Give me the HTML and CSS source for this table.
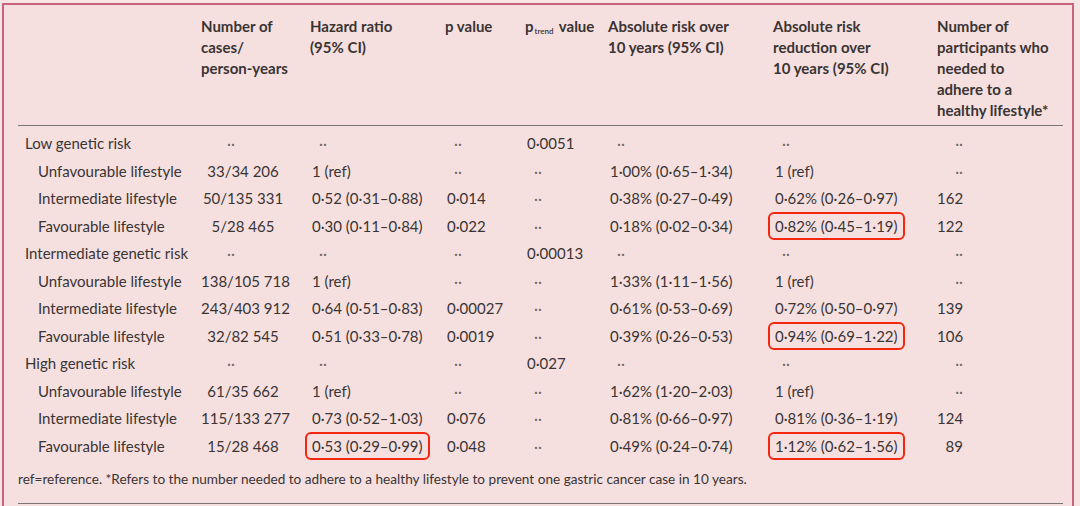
FILE: index.html
```html
<!DOCTYPE html>
<html lang="en">
<head>
<meta charset="utf-8">
<title>Table</title>
<link rel="stylesheet" href="styles.css">
</head>
<body>
<div class="panel">
  <table class="tbl">
    <colgroup>
      <col class="w0"><col class="w1"><col class="w2"><col class="w3"><col class="w4"><col class="w5"><col class="w6"><col class="w7">
    </colgroup>
    <thead>
      <tr>
        <th></th>
        <th>Number of<br>cases/<br>person-years</th>
        <th>Hazard ratio<br>(95% CI)</th>
        <th>p value</th>
        <th>p<sub>trend</sub> value</th>
        <th>Absolute risk over<br>10 years (95% CI)</th>
        <th>Absolute risk<br>reduction over<br>10 years (95% CI)</th>
        <th>Number of<br>participants who<br>needed to<br>adhere to a<br>healthy lifestyle*</th>
      </tr>
    </thead>
    <tbody>
      <tr class="grp"><td class="lbl">Low genetic risk</td><td class="c1 na">··</td><td class="na">··</td><td class="na">··</td><td>0·0051</td><td class="na">··</td><td class="na">··</td><td class="c7 na">··</td></tr>
      <tr><td class="lbl sub">Unfavourable lifestyle</td><td class="c1">33/34 206</td><td>1 (ref)</td><td class="na">··</td><td class="na">··</td><td>1·00% (0·65–1·34)</td><td>1 (ref)</td><td class="c7 na">··</td></tr>
      <tr><td class="lbl sub">Intermediate lifestyle</td><td class="c1">50/135 331</td><td>0·52 (0·31–0·88)</td><td>0·014</td><td class="na">··</td><td>0·38% (0·27–0·49)</td><td>0·62% (0·26–0·97)</td><td class="c7">162</td></tr>
      <tr><td class="lbl sub">Favourable lifestyle</td><td class="c1">5/28 465</td><td>0·30 (0·11–0·84)</td><td>0·022</td><td class="na">··</td><td>0·18% (0·02–0·34)</td><td><span class="hl">0·82% (0·45–1·19)</span></td><td class="c7">122</td></tr>
      <tr class="grp"><td class="lbl">Intermediate genetic risk</td><td class="c1 na">··</td><td class="na">··</td><td class="na">··</td><td>0·00013</td><td class="na">··</td><td class="na">··</td><td class="c7 na">··</td></tr>
      <tr><td class="lbl sub">Unfavourable lifestyle</td><td class="c1">138/105 718</td><td>1 (ref)</td><td class="na">··</td><td class="na">··</td><td>1·33% (1·11–1·56)</td><td>1 (ref)</td><td class="c7 na">··</td></tr>
      <tr><td class="lbl sub">Intermediate lifestyle</td><td class="c1">243/403 912</td><td>0·64 (0·51–0·83)</td><td>0·00027</td><td class="na">··</td><td>0·61% (0·53–0·69)</td><td>0·72% (0·50–0·97)</td><td class="c7">139</td></tr>
      <tr><td class="lbl sub">Favourable lifestyle</td><td class="c1">32/82 545</td><td>0·51 (0·33–0·78)</td><td>0·0019</td><td class="na">··</td><td>0·39% (0·26–0·53)</td><td><span class="hl">0·94% (0·69–1·22)</span></td><td class="c7">106</td></tr>
      <tr class="grp"><td class="lbl">High genetic risk</td><td class="c1 na">··</td><td class="na">··</td><td class="na">··</td><td>0·027</td><td class="na">··</td><td class="na">··</td><td class="c7 na">··</td></tr>
      <tr><td class="lbl sub">Unfavourable lifestyle</td><td class="c1">61/35 662</td><td>1 (ref)</td><td class="na">··</td><td class="na">··</td><td>1·62% (1·20–2·03)</td><td>1 (ref)</td><td class="c7 na">··</td></tr>
      <tr><td class="lbl sub">Intermediate lifestyle</td><td class="c1">115/133 277</td><td>0·73 (0·52–1·03)</td><td>0·076</td><td class="na">··</td><td>0·81% (0·66–0·97)</td><td>0·81% (0·36–1·19)</td><td class="c7">124</td></tr>
      <tr><td class="lbl sub">Favourable lifestyle</td><td class="c1">15/28 468</td><td><span class="hl">0·53 (0·29–0·99)</span></td><td>0·048</td><td class="na">··</td><td>0·49% (0·24–0·74)</td><td><span class="hl">1·12% (0·62–1·56)</span></td><td class="c7">89</td></tr>
    </tbody>
  </table>
  <p class="note">ref=reference. *Refers to the number needed to adhere to a healthy lifestyle to prevent one gastric cancer case in 10 years.</p>
  <div class="rule"></div>
</div>
</body>
</html>
```

FILE: styles.css
```css
html, body {
  margin: 0;
  padding: 0;
  background: #f7e5e4;
}
body {
  font-family: Lato, "Open Sans", "DejaVu Sans", sans-serif;
  color: #3a3434;
  height: 506px;
  overflow: hidden;
}
.panel {
  margin: 3px 0 0 2px;
  width: 1072px;
  height: 520px;
  background: #f5e0df;
  border: 2px solid #c9637c;
  border-bottom: none;
  padding: 11px 0 0 14px;
  box-sizing: border-box;
}
.tbl {
  border-collapse: collapse;
  table-layout: fixed;
  width: 1045px;
  font-size: 15px;
}
.w0 { width: 183px; }
.w1 { width: 109px; }
.w2 { width: 135px; }
.w3 { width: 80px; }
.w4 { width: 83px; }
.w5 { width: 165px; }
.w6 { width: 164px; }
.w7 { width: 126px; }

.tbl th {
  text-align: left;
  vertical-align: top;
  font-weight: 700;
  line-height: 21px;
  padding: 0 0 4px 0;
  border-bottom: 1.5px solid #7a7474;
  color: #3a3434;
  white-space: nowrap;
}
.tbl th sub {
  font-size: 8px;
  font-weight: 600;
  vertical-align: -2px;
  line-height: 0;
  margin: 0 2px 0 1px;
}
.tbl td {
  height: 27.5px;
  padding: 0 0 0 2px;
  line-height: 27.5px;
  white-space: nowrap;
  vertical-align: middle;
}
.tbl tbody tr:first-child td {
  height: 28.5px;
  padding-top: 3px;
}
.lbl { padding-left: 7px !important; }
.lbl.sub { padding-left: 20px !important; }
.tbl td.c1 {
  text-align: center;
  padding: 0 25px 0 0;
}
.tbl td.na {
  color: #6f6868;
  padding-left: 9px;
}
.tbl td.c1.na {
  text-align: left;
  padding-left: 26px;
}
.tbl td.c7 {
  text-align: right;
  padding: 0 100px 0 0;
}
.hl {
  position: relative;
}
.hl::after {
  content: "";
  position: absolute;
  left: -7px;
  right: -7px;
  top: -5px;
  bottom: -5px;
  border: 2.5px solid #f5260f;
  border-radius: 6px;
}
.note {
  margin: 10px 0 0 0;
  font-size: 13.6px;
  line-height: 18px;
  color: #3a3434;
}
.rule {
  margin-top: 15px;
  width: 1045px;
  border-top: 1.5px solid #7a7474;
}
```
